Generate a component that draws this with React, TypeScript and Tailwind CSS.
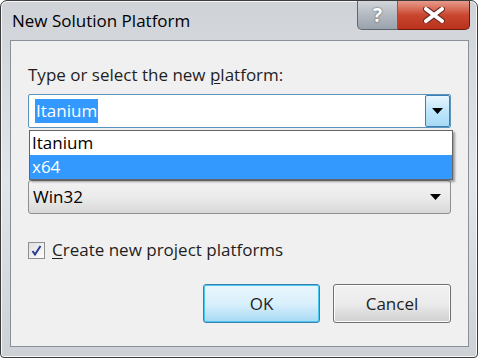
import { useState } from 'react';

const font = { fontFamily: '"Open Sans", "Noto Sans", "Liberation Sans", sans-serif' };

function Arrow() {
  return (
    <svg width="11" height="7" viewBox="0 0 11 7">
      <path d="M0 0 H11 L5.5 6 Z" fill="#000" />
    </svg>
  );
}

export default function App() {
  const [checked, setChecked] = useState(true);

  return (
    <div className="h-[363px] w-[484px] bg-white" style={font}>
      <div className="flex h-[358px] w-[478px] flex-col rounded-t-[7px] rounded-b-[4px] border border-[#3c3c3c] bg-gradient-to-b from-[#cfd3d8] via-[#e2e5e9] to-[#cdd1d6] shadow-[inset_0_0_0_1px_#f5f7f9]">
        {/* title bar */}
        <div className="flex h-[39px] shrink-0 items-start">
          <div className="pl-[11px] pt-[9px] text-[17px] leading-[22px] text-black">New Solution Platform</div>
          <div className="ml-auto mr-[7px] flex">
            <div className="flex h-[29px] w-[41px] items-center justify-center rounded-bl-[5px] border border-t-0 border-[#5f6670] bg-gradient-to-b from-[#d2d6db] via-[#b3b9c1] to-[#9aa2ac] text-[19px] font-bold leading-none text-white [text-shadow:0_0_2px_#444]">
              ?
            </div>
            <div className="flex h-[29px] w-[72px] items-center justify-center rounded-br-[5px] border border-l-0 border-t-0 border-[#6b1a10] bg-gradient-to-b from-[#e69a8c] via-[#c9462f] to-[#b8321c]">
              <svg width="22" height="16" viewBox="0 0 22 16">
                <path d="M3 2 L19 14 M19 2 L3 14" stroke="#6a2a20" strokeWidth="6" strokeLinecap="round" />
                <path d="M3 2 L19 14 M19 2 L3 14" stroke="#fff" strokeWidth="4" strokeLinecap="round" />
              </svg>
            </div>
          </div>
        </div>

        {/* client area */}
        <div className="relative mx-[9px] h-[307px] w-[459px] border border-[#8a9099] bg-[#f0f0f0] px-[17px] pt-[22px]">
          <div className="text-[17px] leading-[24px] text-[#1e1e1e]">
            Type or select the new <span className="underline underline-offset-2">p</span>latform:
          </div>

          {/* editable combo */}
          <div className="mt-[7px] flex h-[34px] items-stretch rounded-[2px] border border-[#5c93bc] bg-white">
            <div className="flex flex-1 items-center pl-[6px]">
              <span className="bg-[#3399ff] px-px text-[17px] leading-[24px] text-white">Itanium</span>
            </div>
            <div className="flex w-[25px] items-center justify-center rounded-[2px] border border-[#3c7fb1] bg-gradient-to-b from-[#eaf6fd] via-[#bee6fd] to-[#a7d9f5]">
              <Arrow />
            </div>
          </div>

          {/* read-only combo */}
          <div className="mt-[52px] flex h-[34px] items-center rounded-[3px] border border-[#8e8f8f] bg-gradient-to-b from-[#f2f2f2] via-[#ebebeb] to-[#d8d8d8] pl-[4px] pr-[9px]">
            <span className="flex-1 text-[17px] leading-[24px] text-black">Win32</span>
            <Arrow />
          </div>

          {/* checkbox */}
          <label className="mt-[24px] flex items-center gap-[7px] text-[17px] leading-[24px] text-[#1e1e1e]">
            <span
              onClick={() => setChecked((v) => !v)}
              className="flex h-[17px] w-[17px] items-center justify-center border border-[#8f8f8f] bg-gradient-to-br from-[#e0e0e0] to-[#fdfdfd]"
            >
              {checked && (
                <svg width="13" height="13" viewBox="0 0 13 13">
                  <path d="M2.5 7 L5 10.5 L10.5 2" stroke="#2a3c8c" strokeWidth="2" fill="none" />
                </svg>
              )}
            </span>
            <span>
              <span className="underline underline-offset-2">C</span>reate new project platforms
            </span>
          </label>

          {/* buttons */}
          <div className="mt-[22px] flex justify-end gap-[13px]">
            <button
              type="button"
              className="h-[39px] w-[117px] rounded-[3px] border border-[#3c7fb1] bg-gradient-to-b from-[#eaf6fd] via-[#d9f0fc] to-[#a7d9f5] text-[17px] text-[#1e1e1e] shadow-[inset_0_0_0_1px_#48c6f0]"
            >
              OK
            </button>
            <button
              type="button"
              className="h-[39px] w-[118px] rounded-[3px] border border-[#707070] bg-gradient-to-b from-[#f2f2f2] via-[#ebebeb] to-[#d0d0d0] text-[17px] text-[#1e1e1e] shadow-[inset_0_0_0_1px_#fcfcfc]"
            >
              Cancel
            </button>
          </div>

          {/* open dropdown list */}
          <div className="absolute left-[18px] top-[89px] w-[424px] border border-[#646464] bg-white text-[17px] leading-[23px] text-black shadow-[2px_2px_2px_rgba(0,0,0,0.35)]">
            <div className="h-[24px] pl-[2px]">Itanium</div>
            <div className="h-[24px] bg-[#3399ff] pl-[2px] text-white">x64</div>
          </div>
        </div>
      </div>
    </div>
  );
}
